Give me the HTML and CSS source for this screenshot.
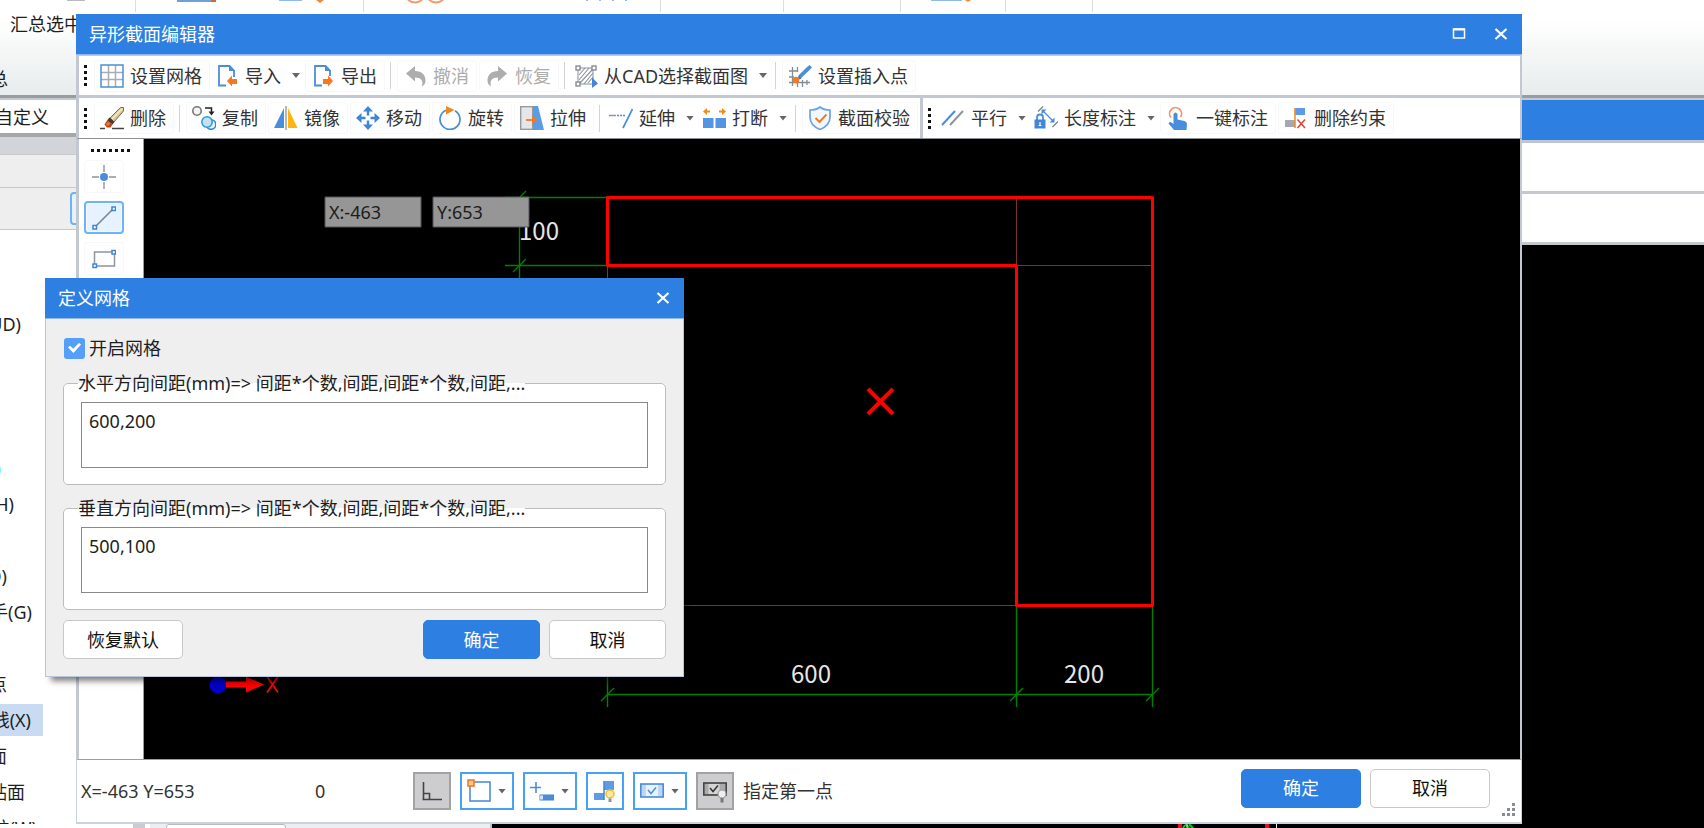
FILE: index.html
```html
<!DOCTYPE html>
<html lang="zh-CN">
<head>
<meta charset="utf-8">
<title>异形截面编辑器</title>
<link rel="stylesheet" href="styles.css">
</head>
<body>
<div class="app">
  <header class="ribbon">
    <svg class="ribbon-art" width="1200" height="12" aria-hidden="true">
      <path d="M135.5 0V14M363.5 0V14M660.5 0V14M783.5 0V14M900.5 0V14M1005.5 0V14M1092.5 0V14" stroke="#dcdcdc"/>
      <path d="M67 .5H85" stroke="#b8bcc0"/>
      <path d="M177 0H216V2H177Z" fill="#6f9fd8"/><path d="M211 0h5v2h-5z" fill="#c9693c"/>
      <path d="M279 .5H302M931 .5H962" stroke="#8ebcf0"/>
      <path d="M316 0h8l-4 3zM965 0h6l-3 2z" fill="#f0883a"/>
      <path d="M408 0q7 5 14 0M429 0q7 5 14 0" fill="none" stroke="#f39a6b" stroke-width="2"/>
      <path d="M586 .5h2M599 .5h2M612 .5h2M625 .5h2" stroke="#8ebcf0"/>
    </svg>
    <div class="ribbon-label">汇总选中</div>
    <div class="ribbon-group">总</div>
  </header>
  <main class="app-main">
    <aside class="navigator">
      <div class="nav-tab"><span>自定义</span></div>
      <div class="nav-head"></div>
      <div class="nav-row"></div>
      <div class="nav-row nav-tools"><div class="nav-tool"></div></div>
      <ul class="tree">
        <li><span style="width:21px">(UD)</span></li>
        <li></li><li></li><li></li>
        <li class="cyan"><span style="width:1px">)</span></li>
        <li><span style="width:14px">(H)</span></li>
        <li></li>
        <li><span style="width:7px">(O)</span></li>
        <li><span style="width:32px">手(G)</span></li>
        <li></li>
        <li><span style="width:7px">点</span></li>
        <li class="current"><span style="width:31px">线(X)</span></li>
        <li><span style="width:7px">面</span></li>
        <li><span style="width:25px">贴面</span></li>
        <li><span style="width:37px">柱(W)</span></li>
      </ul>
    </aside>
    <section class="view">
      <div class="view-title"></div>
      <div class="view-bar"></div>
      <div class="view-bar"></div>
      <div class="view-canvas"></div>
    </section>
  </main>
  <footer class="app-foot">
    <span class="foot-scroll"></span><span class="foot-panel"><span class="foot-field"></span></span>
    <svg class="foot-art" width="120" height="4" aria-hidden="true"><path d="M1 0h4v4H1zM88 0h4v4h-4z" fill="#e01020"/><path d="M6 4q3-6 6 0M12 0l4 4" stroke="#00d020" stroke-width="2" fill="none"/><path d="M10 0v4M99.500 0v4" stroke="#eee"/></svg>
  </footer>
</div>

<section class="editor" aria-label="异形截面编辑器">
  <div class="titlebar">
    <span>异形截面编辑器</span>
    <button class="win-btn" type="button" aria-label="最大化"><svg width="14" height="14"><rect x="1.500" y="2" width="11" height="9" fill="none" stroke="#fff" stroke-width="1.500"/><path d="M1 2.500H13" stroke="#fff" stroke-width="2"/></svg></button>
    <button class="win-btn" type="button" aria-label="关闭"><svg width="14" height="14"><path d="M1.500 2 12.500 12M12.500 2 1.500 12" stroke="#fff" stroke-width="2.200"/></svg></button>
  </div>

  <div class="toolbar">
    <span class="grip"></span>
    <button class="tool" type="button"><svg class="ico" viewBox="0 0 24 24"><path d="M8.500 1V23M15.500 1V23M1 8.500H23M1 15.500H23" stroke="#a8adb3" stroke-width="1.500"/><rect x="1" y="1" width="22" height="22" fill="none" stroke="#4a90d9" stroke-width="1.500"/></svg>设置网格</button>
    <button class="tool menu" type="button"><svg class="ico" viewBox="0 0 24 24"><path d="M11 21.500H4V2H14.500L19 6.500V13" fill="none" stroke="#4a8edb" stroke-width="1.800"/><path d="M14 1.500V7H20Z" fill="#4a8edb"/><path d="M12 17l5-5.500v3.500h5v5h-5V22.500z" fill="#f47920"/></svg>导入<i class="caret"></i></button>
    <button class="tool" type="button"><svg class="ico" viewBox="0 0 24 24"><path d="M11 21.500H4V2H14.500L19 6.500V12" fill="none" stroke="#4a8edb" stroke-width="1.800"/><path d="M14 1.500V7H20Z" fill="#4a8edb"/><path d="M22 17l-5-5.500v3.500h-5v5h5V22.500z" fill="#f47920"/></svg>导出</button>
    <span class="sep"></span>
    <button class="tool" type="button" disabled><svg class="ico" viewBox="0 0 24 24"><path d="M3 9.500 12 2v5c7 0 10.500 4 10.500 9.500 0 2.500-1 4.500-3.500 6 1.500-6-1-9-7-9v4z" fill="#adadad"/></svg>撤消</button>
    <button class="tool" type="button" disabled><svg class="ico" viewBox="0 0 24 24"><path d="M22 9.500 13 2v5C6 7 2.500 11 2.500 16.500c0 2.500 1 4.500 3.500 6-1.500-6 1-9 7-9v4z" fill="#adadad"/></svg>恢复</button>
    <span class="sep"></span>
    <button class="tool menu" type="button"><svg class="ico" viewBox="0 0 24 24"><path d="M5 11l6-7M5 16L15 4M5 20L19 5M10 20l9-11M14 19l5-6" stroke="#8c9298" stroke-width="1.100"/><rect x="4" y="4" width="15" height="16" fill="none" stroke="#8c9298"/><g fill="#fff" stroke="#7d858c" stroke-width="1.300"><rect x="2" y="2" width="4" height="4"/><rect x="18" y="2" width="4" height="4"/><rect x="2" y="18" width="4" height="4"/></g><path d="M18 13.500V24l6-4.500z" fill="#3f86d6"/></svg>从CAD选择截面图<i class="caret"></i></button>
    <span class="sep"></span>
    <button class="tool" type="button"><svg class="ico" viewBox="0 0 24 24"><path d="M4.500 3V22M9.500 17V23M14.500 16V23M1 7H9M1 13H6M1 18.500H22M19 16v5M9.500 3V8" stroke="#858c92" stroke-width="1.300"/><path d="M10 12 18 4l3.500-3L24 3.500 20.500 7 12 15z" fill="#4a8edb"/><path d="M11 12l2.500 2.500-2 1-1.500-1.500z" fill="#3474c4"/><circle cx="8" cy="16" r="3.200" fill="#f47920"/></svg>设置插入点</button>
  </div>

  <div class="toolbar-row">
    <div class="toolbar">
      <span class="grip"></span>
      <button class="tool" type="button"><svg class="ico" viewBox="0 0 24 24"><path d="M10 12 20.500 1.500h3V5L14 16z" fill="#d9c596" stroke="#5a5040" stroke-width=".8"/><path d="M12 13 22.500 2.500" stroke="#f6ecc8" stroke-width="1.500"/><path d="M9.500 11.500 14.500 16l-2 2.500-5.500-4z" fill="#4b3a2c"/><path d="M7 14.500l5.500 4-2 3H7L4.500 18.500z" fill="#c63f10"/><circle cx="8" cy="18" r="1.800" fill="#ef7a3c"/><path d="M0 22.500H5M12 22.500H24" stroke="#444" stroke-width="1.300"/></svg>删除</button>
      <span class="sep"></span>
      <button class="tool" type="button"><svg class="ico" viewBox="0 0 24 24"><circle cx="5" cy="5" r="4.200" fill="#f4f4f4" stroke="#777" stroke-width="1.600"/><path d="M13 2H19.500V6" fill="none" stroke="#222" stroke-width="1.500"/><path d="M16.500 5.500h6l-3 4z" fill="#222"/><circle cx="19" cy="18.500" r="4.800" fill="#e8f4ff" stroke="#3586d0" stroke-width="1.500"/><circle cx="15" cy="16" r="5.200" fill="#c3e1f8" stroke="#2a9ad0" stroke-width="1.500"/></svg>复制</button>
      <button class="tool" type="button"><svg class="ico" viewBox="0 0 24 24"><path d="M10 2V22H0Z" fill="#4a8edb"/><path d="M14 2V22H23.500Z" fill="#ffb411"/><path d="M12 0V24" stroke="#9aa0a6" stroke-width="1.500"/></svg>镜像</button>
      <button class="tool" type="button"><svg class="ico" viewBox="0 0 24 24" fill="#3f86d6"><path d="M12 0l5 5.500H7zM12 24l5-5.500H7zM0 12l5.500-5v10zM24 12l-5.500-5v10z"/><path d="M12 4V9.500M12 14.500V20M4 12H9.500M14.500 12H20" stroke="#3f86d6" stroke-width="2.500"/></svg>移动</button>
      <button class="tool" type="button"><svg class="ico" viewBox="0 0 24 24"><path d="M8 4.300A10 10 0 1 0 17 4.800" fill="none" stroke="#4a8edb" stroke-width="1.700"/><path d="M8 0l8.500 4L8 8.500z" fill="#f08a1d"/></svg>旋转</button>
      <button class="tool" type="button"><svg class="ico" viewBox="0 0 24 24"><rect x=".7" y=".7" width="12" height="22.600" fill="#e4e6ea" stroke="#8f959b" stroke-width="1.300"/><path d="M13 0h5l6 24H13z" fill="#5c9ce6"/><path d="M6 14H14" stroke="#f47920" stroke-width="1.800"/><path d="M12 9.500l5 4.500-5 4.500z" fill="#f47920"/></svg>拉伸</button>
      <span class="sep"></span>
      <button class="tool menu" type="button"><svg class="ico" viewBox="0 0 24 24"><path d="M0 9.500H7" stroke="#8f959b" stroke-width="1.500"/><path d="M8 9.500H17" stroke="#4a8edb" stroke-width="1.700" stroke-dasharray="2 1"/><path d="M23.500 3 14 22" stroke="#4a8edb" stroke-width="1.700"/></svg>延伸<i class="caret"></i></button>
      <button class="tool menu" type="button"><svg class="ico" viewBox="0 0 24 24"><path d="M1 12h10.500v10H1zM13.500 12h11v10H13.500z" fill="#5296e3"/><path d="M3 5.500H8M17 5.500H22" stroke="#f08a1d" stroke-width="1.800"/><path d="M5 2v7L1 5.500zM20 2v7l4-3.500z" fill="#f08a1d"/></svg>打断<i class="caret"></i></button>
      <span class="sep"></span>
      <button class="tool" type="button"><svg class="ico" viewBox="0 0 24 24"><path d="M12 1c3 2.500 6.500 3 10 3v7c0 6-4 10-10 12.500C6 21 2 17 2 11V4c3.500 0 7-.5 10-3z" fill="#f3f8ff" stroke="#6ba3e6" stroke-width="1.700"/><path d="M7.500 12l4 4 7-7.500" fill="none" stroke="#f47920" stroke-width="2"/></svg>截面校验</button>
    </div>
    <div class="toolbar toolbar-next">
      <span class="grip"></span>
      <button class="tool menu" type="button"><svg class="ico" viewBox="0 0 24 24"><path d="M1 19 14 5" stroke="#4a8edb" stroke-width="2"/><path d="M9 19 22 5" stroke="#8f959b" stroke-width="2"/></svg>平行<i class="caret"></i></button>
      <button class="tool menu" type="button"><svg class="ico" viewBox="0 0 24 24"><path d="M4 5.500 9 .5M18.500 21 24 15.500" stroke="#7d858c" stroke-width="1.300"/><path d="M9 5 19 15" stroke="#4a8edb" stroke-width="1.300"/><path d="M7.500 3.500h5l-5 5zM20.500 16.500h-5l5-5z" fill="#4a8edb"/><path d="M3 14v-2.500a3 3 0 0 1 6 0V14" fill="none" stroke="#4a8edb" stroke-width="1.800"/><path d="M.5 13.500h11v9H.5z" fill="#3f86d6"/><path d="M6 16v4M4.500 19.500h3" stroke="#fff" stroke-width="1.200"/></svg>长度标注<i class="caret"></i></button>
      <button class="tool" type="button"><svg class="ico" viewBox="0 0 24 24"><path d="M5 11.500A6 6 0 1 1 14.500 11" fill="none" stroke="#f4976c" stroke-width="1.800"/><path d="M7.500 8q2-3 4 0v5.500l7 1.500q2.500 1 2.500 3l-.5 6H8L2.500 17.500q1-2.500 3-1l2 1.500z" fill="#4a8edb"/></svg>一键标注</button>
      <button class="tool" type="button"><svg class="ico" viewBox="0 0 24 24"><path d="M1 14h10v7H1z" fill="#a3a9b2"/><path d="M11 2h10v7H11z" fill="#5c9ce6"/><path d="M11 2V22" stroke="#f08a1d" stroke-width="1.500"/><path d="M13.500 13.500 21 22M21 13.500 13.500 22" stroke="#e03a2e" stroke-width="1.400"/></svg>删除约束</button>
    </div>
  </div>

  <div class="workspace">
    <nav class="side" aria-label="绘图工具">
      <span class="grip-h"></span>
      <button class="side-btn" type="button" aria-label="点"><svg class="ico" viewBox="0 0 24 24"><path d="M12 0V7M12 17V24M0 12H7M17 12H24" stroke="#8f959b" stroke-width="1.400"/><circle cx="12" cy="12" r="4" fill="#4a8edb"/></svg></button>
      <button class="side-btn selected" type="button" aria-label="直线"><svg class="ico" viewBox="0 0 24 24"><path d="M3 21 21 3" stroke="#7d858c" stroke-width="1.600"/><g fill="#fff" stroke="#3f86d6" stroke-width="1.500"><rect x="1" y="19.500" width="3.500" height="3.500"/><rect x="20" y="1" width="3.500" height="3.500"/></g></svg></button>
      <button class="side-btn" type="button" aria-label="矩形"><svg class="ico" viewBox="0 0 24 24"><rect x="2.500" y="5" width="20" height="14" fill="none" stroke="#8f959b" stroke-width="1.500"/><g fill="#fff" stroke="#3f86d6" stroke-width="1.500"><rect x="1" y="17" width="3.500" height="3.500"/><rect x="20" y="3.500" width="3.500" height="3.500"/></g></svg></button>
    </nav>
    <svg class="canvas" viewBox="0 0 1376 620" preserveAspectRatio="xMinYMin meet" role="img" aria-label="截面图">
      <path d="M872.500 58V126M872 126.500H1008M463.500 127V466M463 466.500H872" stroke="#7a3434" fill="none"/>
      <g stroke="#008000" fill="none" stroke-width="1.400">
        <path d="M361 58.500H463M361 126.500H463M375.500 58V466M463.500 466V568M872.500 466V568M1008.500 466V568M463 555.500H1008"/>
        <path d="M369 65l13-13M369 133l13-13M457 562l13-13M866 562l13-13M1002 562l13-13"/>
      </g>
      <path d="M463.500 58.500H1008.500V466.500H872.500V126.500H463.500Z" stroke="#f00" stroke-width="3" stroke-linejoin="round" fill="none"/>
      <path d="M724 250l25 25M749 250l-25 25" stroke="#f00" stroke-width="4"/>
      <circle cx="74" cy="546" r="8.500" fill="#0000c8"/>
      <path d="M82 542.500h20v-5l18 8-18 8v-5H82z" fill="#f00"/>
      <path d="M123 537.500l11 16M134 537.500l-11 16" stroke="#f00" stroke-width="1.800"/>
      <g class="dim"><text x="375" y="101">100</text><text x="647" y="544">600</text><text x="920" y="544">200</text></g>
      <path d="M181 58h96v30h-96zM289 58h96v30h-96z" fill="#969696" stroke="#55555c"/>
      <g class="coord"><text x="185" y="80">X:-463</text><text x="293" y="80">Y:653</text></g>
    </svg>
  </div>

  <div class="status">
    <span class="status-pos">X=-463 Y=653</span>
    <span class="status-num">0</span>
    <button class="snap off" type="button" aria-label="正交"><svg class="ico" viewBox="0 0 24 24"><path d="M3.500 3V21M2.500 20.500H22M3.500 14.500H9.500V20.500" fill="none" stroke="#444" stroke-width="1.600"/></svg></button>
    <button class="snap" type="button" aria-label="顶点捕捉"><svg class="ico" viewBox="0 0 24 24"><rect x="3" y="3" width="20" height="19" fill="none" stroke="#4a8edb" stroke-width="1.600"/><rect x="1" y="1" width="6" height="6" fill="#fbc9a0" stroke="#f47920" stroke-width="1.600"/></svg><i class="caret"></i></button>
    <button class="snap" type="button" aria-label="偏移"><svg class="ico" viewBox="0 0 24 24"><path d="M6 3V14M0 8.500H11" stroke="#4a8edb" stroke-width="1.600"/><rect x="10" y="16" width="14" height="5" fill="#4a8edb" stroke="#3f86d6"/><rect x="10" y="16.500" width="3" height="4" fill="#cfe3fa"/></svg><i class="caret"></i></button>
    <button class="snap" type="button" aria-label="约束提示"><svg class="ico" viewBox="0 0 24 24"><path d="M11 2h10v9H11zM1 14h10v7H1z" fill="#5c9ce6"/><path d="M11 2V21" stroke="#3f86d6" stroke-width="1.500"/><circle cx="17" cy="15" r="4" fill="#ffe9a0" stroke="#eebb2c" stroke-width="1.500"/><path d="M15.500 19.500h3v3.500h-3z" fill="#8c9298"/></svg></button>
    <button class="snap" type="button" aria-label="动态输入"><svg class="ico" viewBox="0 0 24 24"><rect x=".8" y="5" width="22.400" height="13" fill="#bcd7f7" stroke="#4a8edb" stroke-width="1.600"/><path d="M6 6h12v11H6z" fill="#e9f3ff"/><path d="M8 11l3 3.500 5-6" fill="none" stroke="#4a8edb" stroke-width="1.500"/></svg><i class="caret"></i></button>
    <button class="snap off" type="button" aria-label="输入提示"><svg class="ico" viewBox="0 0 24 24"><rect x=".8" y="4" width="22.400" height="12" fill="#aaa" stroke="#444" stroke-width="1.600"/><path d="M5.500 5h11v10h-11z" fill="#d4d4d4"/><path d="M7 9l3 3.500 5-6" fill="none" stroke="#333" stroke-width="1.500"/><circle cx="19" cy="15" r="4" fill="#eee" stroke="#999" stroke-width="1.200"/><path d="M17.500 19h3v4.500h-3z" fill="#777"/></svg></button>
    <span class="status-hint">指定第一点</span>
    <button class="btn primary" type="button">确定</button>
    <button class="btn" type="button">取消</button>
    <svg class="resize" width="14" height="14" aria-hidden="true" fill="#888d94"><path d="M10 1h3v3h-3zM10 6h3v3h-3zM10 11h3v3h-3zM5 6h3v3H5zM5 11h3v3H5zM0 11h3v3H0z"/></svg>
  </div>
</section>

<form class="dialog" aria-label="定义网格">
  <div class="titlebar">
    <span>定义网格</span>
    <button class="win-btn" type="button" aria-label="关闭"><svg width="14" height="14"><path d="M1.500 2 12.500 12M12.500 2 1.500 12" stroke="#fff" stroke-width="2.200"/></svg></button>
  </div>
  <div class="dialog-body">
    <label class="check"><input type="checkbox" checked>开启网格</label>
    <fieldset class="group">
      <legend><label for="gx">水平方向间距(mm)=&gt; 间距*个数,间距,间距*个数,间距,...</label></legend>
      <textarea id="gx">600,200</textarea>
    </fieldset>
    <fieldset class="group">
      <legend><label for="gy">垂直方向间距(mm)=&gt; 间距*个数,间距,间距*个数,间距,...</label></legend>
      <textarea id="gy">500,100</textarea>
    </fieldset>
    <div class="actions">
      <button class="btn reset" type="reset">恢复默认</button>
      <button class="btn primary" type="button">确定</button>
      <button class="btn" type="button">取消</button>
    </div>
  </div>
</form>
</body>
</html>
```
FILE: styles.css
```css
* { box-sizing: border-box; }
html, body { height: 100%; }
body {
  margin: 0;
  overflow: hidden;
  position: relative;
  background: #000;
  color: #1e1e1e;
  font: 18px/24px "Noto Sans", "Noto Sans CJK SC", sans-serif;
}
button, textarea, input { font: inherit; color: inherit; }
button { display: flex; align-items: center; margin: 0; padding: 0; border: 0; background: none; white-space: nowrap; }
.ico { width: 24px; height: 24px; flex: none; }
.caret { width: 8px; height: 5px; flex: none; background: #666; clip-path: polygon(0 0, 100% 0, 50% 100%); }

/* application behind the windows */
.app { height: 100%; display: flex; flex-direction: column; }
.ribbon { height: 98px; flex: none; display: flex; flex-direction: column; overflow: hidden; background: linear-gradient(#fff 20px, #e7ecec 95px); border-bottom: 3px solid #999da0; }
.ribbon-art { display: block; flex: none; }
.ribbon-label { padding-left: 10px; line-height: 24px; }
.ribbon-group { width: 8px; margin-top: 31px; display: flex; justify-content: flex-end; line-height: 24px; }
.app-main { flex: 1; min-height: 0; display: flex; border-top: 2px solid #c3c8d2; }
.navigator { width: 490px; flex: none; background: #fff; overflow: hidden; }
.nav-tab { height: 37px; border-bottom: 4px solid #a4a8ab; display: flex; align-items: center; white-space: nowrap; }
.nav-tab span { width: 49px; display: flex; justify-content: flex-end; }
.nav-head { height: 18px; background: #d3d4da; border-bottom: 1px solid #c8c8c8; }
.nav-row { height: 33px; background: #eee; border-bottom: 1px solid #c8c8c8; }
.nav-tools { height: 42px; padding: 4px 0 4px 70px; }
.nav-tool { width: 40px; height: 33px; border: 2px solid #6db3f5; border-radius: 4px; background: #e6f2fe; }
.tree { list-style: none; margin: 0; padding: 76px 0 0; white-space: nowrap; }
.tree li { height: 36px; display: flex; align-items: center; }
.tree span { display: flex; justify-content: flex-end; }
.tree .cyan { color: #00d8f0; }
.tree .current { position: relative; z-index: 0; }
.tree .current::before { content: ""; position: absolute; z-index: -1; left: 0; top: 2px; width: 43px; height: 32px; background: #c9dbf2; }
.view { flex: 1; display: flex; flex-direction: column; background: #000; }
.view-title { height: 43px; background: #2d7fe2; border-bottom: 3px solid #bcc5d3; }
.view-bar { height: 51px; background: #fff; border-bottom: 3px solid #c5c9cd; }
.app-foot { height: 4px; flex: none; display: flex; background: #000; overflow: hidden; }
.foot-scroll { width: 150px; flex: none; background: linear-gradient(90deg, #fff 133px, #ccc 133px 145px, #fff 145px); }
.foot-panel { width: 342px; padding-left: 16px; flex: none; background: #eee; border-right: 2px solid #bcc5d3; }
.foot-field { display: block; width: 120px; height: 10px; background: #fff; border: 1px solid #bbb; border-radius: 3px; }
.foot-art { margin-left: 685px; }

/* shared window parts */
.titlebar { height: 41px; flex: none; display: flex; align-items: center; padding: 0 13px; background: #2d7fe2; border-bottom: 1px solid #8fb6ea; color: #fff; }
.titlebar span { flex: 1; }
.win-btn { width: 16px; height: 24px; margin-left: 26px; justify-content: center; }
.btn { width: 120px; height: 39px; justify-content: center; background: #fff; border: 1px solid #c8c8c8; border-radius: 5px; color: #111; }
.btn.primary { background: #2d7fe2; border-color: #2d7fe2; color: #fff; }

/* section editor */
.editor { position: absolute; left: 76px; right: 182px; top: 14px; bottom: 4px; display: flex; flex-direction: column; background: #fff; border-bottom: 2px solid #c9d2e2; }
.toolbar { height: 43px; flex: none; display: flex; align-items: center; gap: 2px; padding-left: 5px; border: 0 solid #c3c8d0; border-width: 1px 2px 3px 3px; color: #333; }
.toolbar-row { display: flex; border-bottom: 1px solid #8c9094; border-left: 3px solid #c3c8d0; border-right: 2px solid #c3c8d0; }
.toolbar-row .toolbar { height: 40px; border: 0; }
.toolbar-row .toolbar-next { flex: 1; margin-left: 2px; border-left: 3px solid #c3c8d0; }
.grip { width: 3px; height: 21px; margin-right: 5px; background: repeating-linear-gradient(#111 0 3px, transparent 3px 6px); }
.tool { height: 32px; gap: 6px; padding: 0 8px 0 6px; border-radius: 4px; }
.tool:not(.menu) { box-shadow: inset 0 0 0 1px #f8f8f8; }
.tool:disabled { color: #adadad; }
.tool.menu { padding: 0 3px; }
.tool .caret { margin-left: 5px; }
.sep { width: 1px; height: 27px; margin: 0 4px 0 3px; background: #d4d4d4; }
.workspace { flex: 1; min-height: 0; display: flex; border: 0 solid #c3c8d0; border-width: 0 2px 0 3px; border-bottom: 1px solid #9a9da2; }
.side { width: 65px; flex: none; display: flex; flex-direction: column; align-items: center; gap: 8px; padding: 10px 14px 0 0; border-right: 1px solid #9a9da2; }
.grip-h { width: 40px; height: 3px; margin-left: 14px; background: repeating-linear-gradient(90deg, #111 0 3px, transparent 3px 6px); }
.side-btn { width: 40px; height: 33px; justify-content: center; border-radius: 4px; box-shadow: inset 0 0 0 1px #f8f8f8; }
.side-btn.selected { border: 2px solid #6db3f5; background: #e6f2fe; }
.canvas { flex: 1; min-width: 0; height: 100%; background: #000; }
.dim { fill: #e6e6e6; font: 24px "Noto Sans CJK SC", sans-serif; }
.coord { fill: #1c1c1c; font: 18px "Noto Sans", sans-serif; }
.status { height: 62px; flex: none; display: flex; align-items: center; gap: 9px; padding: 0 5px 0 4px; border: 0 solid #c9d2e2; border-width: 0 1px 0 1px; color: #333; }
.status-pos { width: 225px; }
.status-num { width: 89px; }
.snap { height: 38px; padding: 0 5px; border: 2px solid #45a2f5; }
.snap .caret { margin: 0 1px 0 7px; }
.snap.off { background: #cdcdcf; border-color: #a2a2a4; }
.status-hint { flex: 1; }
.status .btn { margin-bottom: 6px; }
.resize { margin: 36px 0 0 3px; }

/* grid dialog */
.dialog { position: absolute; left: 45px; top: 278px; width: 639px; background: #efefef; border: 1px solid #b9c6de; border-top: 0; box-shadow: 4px 6px 6px -2px rgba(0, 0, 0, .5); }
.dialog .titlebar { margin: 0 -1px; }
.dialog-body { padding: 17px 17px 17px; }
.check { display: flex; align-items: center; gap: 4px; height: 24px; padding-left: 1px; }
.check input { appearance: none; width: 21px; height: 21px; margin: 0; border-radius: 3px; background: #559ff8; display: grid; place-items: center; }
.check input:checked::before { content: ""; width: 13px; height: 10px; background: #fff; clip-path: polygon(0 45%, 16% 28%, 40% 58%, 85% 0, 100% 16%, 42% 100%); }
.group { margin: 0; padding: 7px 17px 16px; border: 1px solid #bcbcbc; border-radius: 5px; background: #fff; }
.group + .group, .check + .group { margin-top: 11px; }
.group legend { margin-left: -3px; padding: 0; }
.group textarea { display: block; width: 100%; height: 66px; padding: 6px 7px; border: 1px solid #888; border-radius: 0; resize: none; outline: 0; line-height: 24px; }
.actions { display: flex; gap: 9px; margin-top: 10px; }
.actions .btn { width: 117px; }
.actions .reset { width: 120px; margin-right: auto; }
```
